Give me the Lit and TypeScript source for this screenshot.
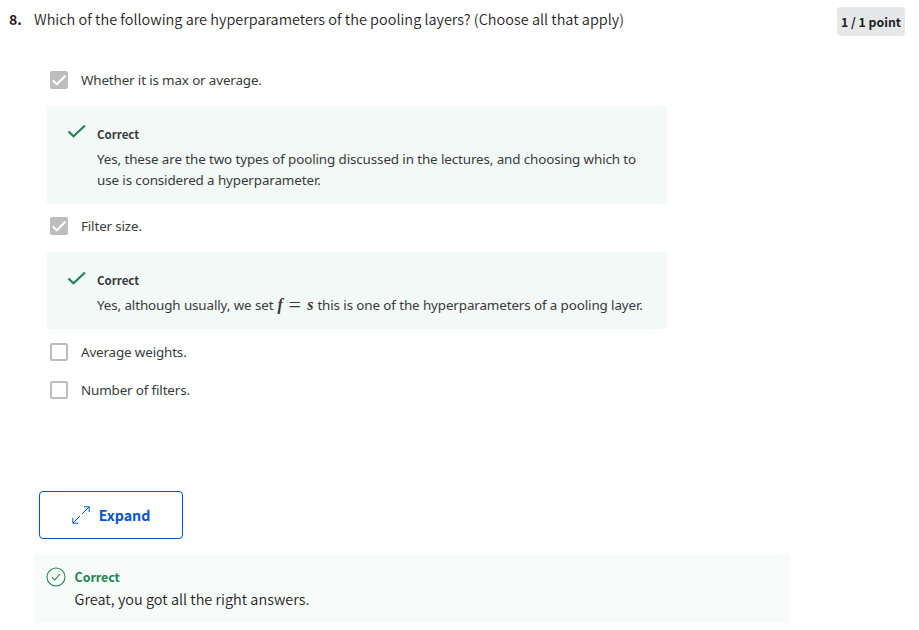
import { LitElement, html, css, nothing, type TemplateResult } from "lit";
import { customElement, property } from "lit/decorators.js";

@customElement("quiz-option")
class QuizOption extends LitElement {
  @property() label = "";
  @property({ type: Boolean }) checked = false;
  static styles = css`
    :host { display: flex; align-items: center; height: 38px; padding-left: 3px; }
    .box { box-sizing: border-box; width: 18px; height: 18px; flex: none; border: 2px solid #bdbdbd; border-radius: 2px; margin-right: 13px; }
    .on { background: #bdbdbd; border: 0; }
    svg { display: block; }
    .label { font: 13.4px/20px "Noto Sans", sans-serif; letter-spacing: -0.14px; color: #373a3c; white-space: nowrap; }
  `;
  render() {
    return html`
      <span class="box ${this.checked ? "on" : ""}">
        ${this.checked
          ? html`<svg width="18" height="18" viewBox="0 0 18 18"><path d="M2.6 9.2 6.8 13.2 15.4 4.6" fill="none" stroke="#fff" stroke-width="2.2" /></svg>`
          : nothing}
      </span>
      <span class="label">${this.label}</span>`;
  }
}

@customElement("answer-note")
class AnswerNote extends LitElement {
  @property({ attribute: false }) lines: TemplateResult[] = [];
  static styles = css`
    :host { display: flex; box-sizing: border-box; width: 620px; background: #f3f9f7; padding: 18px 0 13px 20px; margin: 7px 0 3px; }
    svg { flex: none; width: 20px; height: 16px; margin: 0 10px 0 0; }
    :host(.short) svg { margin-top: 1px; }
    .title { font: bold 11.5px/21px "Noto Sans CJK SC", sans-serif; color: #373a3c; margin-bottom: 4px; }
    .line { font: 13.4px/21px "Noto Sans", sans-serif; letter-spacing: -0.108px; color: #373a3c; white-space: nowrap; }
    .math { display: inline-flex; align-items: baseline; width: 36px; justify-content: space-between; line-height: 1px; margin: 0 4px; }
    .var { font: italic bold 16px/1px "Liberation Serif", serif; }
    .eq { font: 20px/1px "Liberation Serif", serif; transform: translateY(2px) scaleX(1.1); }
  `;
  render() {
    return html`
      <svg viewBox="0 0 20 16"><path d="M1.5 7.4 6.5 12.3 18 1.6" fill="none" stroke="#1f8354" stroke-width="2.1" /></svg>
      <div>
        <div class="title">Correct</div>
        ${this.lines.map((l) => html`<div class="line">${l}</div>`)}
      </div>`;
  }
}

@customElement("app-root")
class AppRoot extends LitElement {
  static styles = css`
    :host { display: block; box-sizing: border-box; height: 630px; background: #fff; overflow: hidden; font-family: "Noto Sans CJK SC", sans-serif; color: #1f1f1f; }
    .head { display: flex; height: 61px; padding: 7px 14px 0 9px; box-sizing: border-box; align-items: flex-start; }
    .num { width: 25px; font-size: 14px; line-height: 24px; font-weight: bold; }
    .question { flex: 1; font-size: 14.49px; line-height: 24px; white-space: nowrap; color: #1f1f1f; font-weight: 350; }
    .points { width: 68px; height: 29px; box-sizing: border-box; padding-top: 1px; border-radius: 4px; background: #e5e7e8; font-size: 12.3px; line-height: 29px; font-weight: bold; text-align: center; white-space: nowrap; }
    .options { padding-left: 47px; height: 430px; box-sizing: border-box; }
    .short { margin-bottom: 4px; }
    .expand { display: flex; align-items: center; justify-content: center; gap: 9px; box-sizing: border-box; width: 144px; height: 48px; margin: 0 0 16px 39px; padding: 0; border: 1px solid #0056d2; border-radius: 4px; background: #fff; color: #0056d2; font: bold 14.2px/24px "Noto Sans CJK SC", sans-serif; }
    .result { display: flex; box-sizing: border-box; width: 756px; height: 68px; margin-left: 34px; padding: 12px 0 0 12px; background: #f7fbf9; }
    .result svg { flex: none; margin-right: 8.5px; }
    .ok { color: #1f8354; font-weight: bold; font-size: 12.4px; line-height: 20px; }
    .msg { font-size: 14.49px; line-height: 24px; white-space: nowrap; color: #1f1f1f; font-weight: 350; }
  `;
  render() {
    return html`
      <div class="head">
        <div class="num">8.</div>
        <div class="question"><span>Which of the following are hyperparameters of the pooling layers? (Choose all that apply)</span></div>
        <div class="points">1 / 1 point</div>
      </div>
      <div class="options">
        <quiz-option checked label="Whether it is max or average."></quiz-option>
        <answer-note .lines=${[
          html`Yes, these are the two types of pooling discussed in the lectures, and choosing which to`,
          html`use is considered a hyperparameter.`,
        ]}></answer-note>
        <quiz-option checked label="Filter size."></quiz-option>
        <answer-note class="short" .lines=${[
          html`Yes, although usually, we set<span class="math"><span class="var">f</span><span class="eq">=</span><span class="var">s</span></span>this is one of the hyperparameters of a pooling layer.`,
        ]}></answer-note>
        <quiz-option label="Average weights."></quiz-option>
        <quiz-option label="Number of filters."></quiz-option>
      </div>
      <button class="expand">
        <svg width="18" height="18" viewBox="0 0 18 18" fill="none" stroke="#0056d2" stroke-width="1"><path d="M12 .8h5.2V6M.8 12v5.2H6M17 1 10 8M8 10 1 17" /></svg>
        <span>Expand</span>
      </button>
      <div class="result">
        <svg width="20" height="20" viewBox="0 0 20 20" fill="none" stroke="#1f8354"><circle cx="10" cy="10" r="9" stroke-width="1.1" /><path d="M6 10.4 8.7 13 14 7" stroke-width="1.1" /></svg>
        <div>
          <div class="ok">Correct</div>
          <div class="msg">Great, you got all the right answers.</div>
        </div>
      </div>`;
  }
}
